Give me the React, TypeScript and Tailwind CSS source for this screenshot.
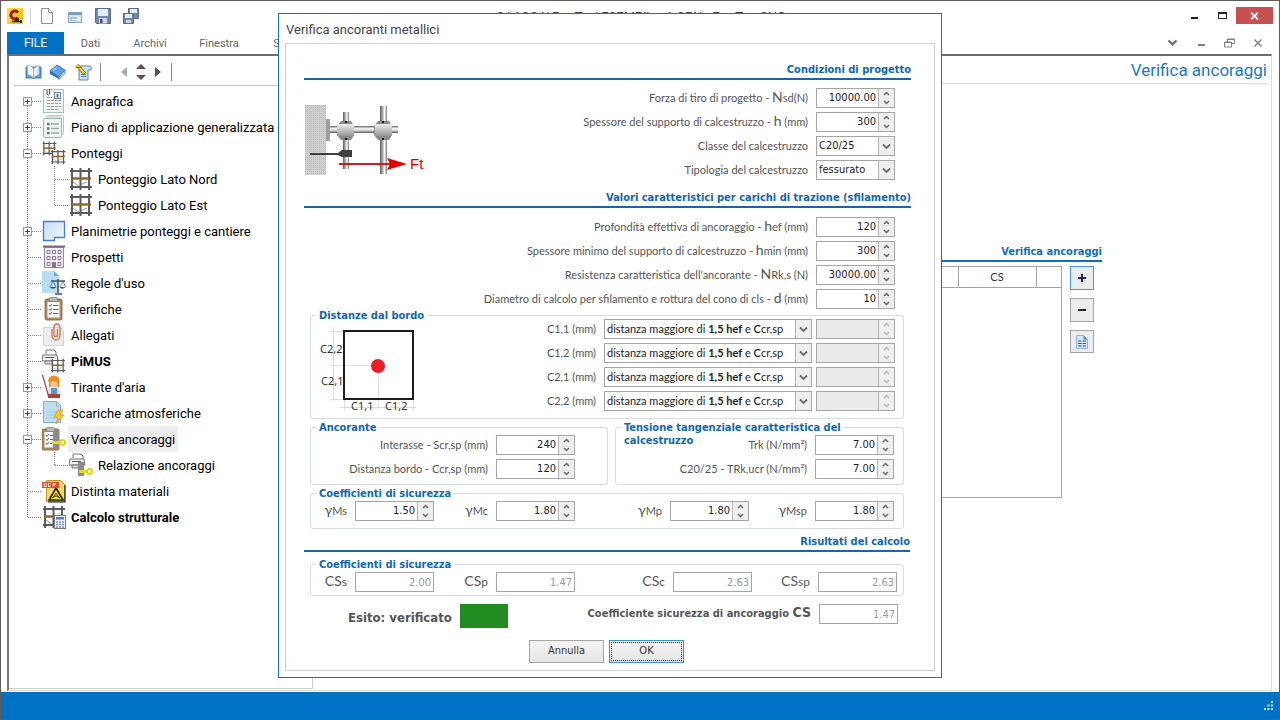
import type { ReactNode } from 'react';
import clsx from 'clsx';

type IconName =
  | 'anagrafica'
  | 'piano'
  | 'ponteggi'
  | 'ponteggio'
  | 'planimetrie'
  | 'prospetti'
  | 'regole'
  | 'verifiche'
  | 'allegati'
  | 'pimus'
  | 'tirante'
  | 'scariche'
  | 'ancoraggi'
  | 'relazione'
  | 'distinta'
  | 'calcolo';

interface TreeNode {
  label: string;
  icon: IconName;
  expander?: '+' | '-';
  child?: 'mid' | 'last';
  bold?: boolean;
  selected?: boolean;
}

const TREE: TreeNode[] = [
  { label: 'Anagrafica', icon: 'anagrafica', expander: '+' },
  { label: 'Piano di applicazione generalizzata', icon: 'piano', expander: '+' },
  { label: 'Ponteggi', icon: 'ponteggi', expander: '-' },
  { label: 'Ponteggio Lato Nord', icon: 'ponteggio', child: 'mid' },
  { label: 'Ponteggio Lato Est', icon: 'ponteggio', child: 'last' },
  { label: 'Planimetrie ponteggi e cantiere', icon: 'planimetrie', expander: '+' },
  { label: 'Prospetti', icon: 'prospetti' },
  { label: "Regole d'uso", icon: 'regole' },
  { label: 'Verifiche', icon: 'verifiche' },
  { label: 'Allegati', icon: 'allegati' },
  { label: 'PiMUS', icon: 'pimus', bold: true },
  { label: "Tirante d'aria", icon: 'tirante', expander: '+' },
  { label: 'Scariche atmosferiche', icon: 'scariche', expander: '+' },
  { label: 'Verifica ancoraggi', icon: 'ancoraggi', expander: '-', selected: true },
  { label: 'Relazione ancoraggi', icon: 'relazione', child: 'last' },
  { label: 'Distinta materiali', icon: 'distinta' },
  { label: 'Calcolo strutturale', icon: 'calcolo', bold: true },
];

/* ---------- small drawings shared by the tree icons ---------- */

function Scaffold({ x = 0, y = 0, s = 1 }: { x?: number; y?: number; s?: number }) {
  return (
    <g transform={`translate(${x} ${y}) scale(${s})`} fill="none">
      <path d="M4 15l7 5M11 18l7-3" stroke="#9a9a9a" strokeWidth="1" />
      <path d="M3 1v22M11.500 1v22M20 1v22" stroke="#5b5b5f" strokeWidth="2" />
      <path d="M1 4h22M1 20h22" stroke="#5b5b5f" strokeWidth="1.800" />
      <path d="M2 11.500h20" stroke="#8a6420" strokeWidth="2.400" />
    </g>
  );
}

function Printer() {
  return (
    <g>
      <path d="M4 5V1h8l2 2v3" fill="#fff" stroke="#777" />
      <path d="M1 6h14l1 6H0z" fill="#f4f4f4" stroke="#6e6e6e" />
      <path d="M3 12h10v3H3z" fill="#d6d6d6" stroke="#777" />
      <path d="M3 8.500h9" stroke="#555" />
    </g>
  );
}

function Clipboard() {
  return (
    <g>
      <rect x="3" y="2" width="17" height="21" rx="1.500" fill="#b08a5e" stroke="#7d5a33" strokeWidth=".8" />
      <rect x="5.500" y="5" width="12" height="15.500" fill="#fff" />
      <rect x="7.500" y="0.500" width="8" height="4" rx="1" fill="#b9b9b9" stroke="#777" strokeWidth=".7" />
      <path d="M7 8l1 1.500L10 7M7 12l1 1.500L10 11M7 16l1 1.500L10 15" fill="none" stroke="#3c6f77" />
      <path d="M11 8.500h5.500M11 12.500h5.500M11 16.500h5.500" stroke="#5d6c70" />
    </g>
  );
}

function AnchorKey() {
  return (
    <g>
      <path d="M10 15.500h8" stroke="#e8dc1e" strokeWidth="3" />
      <circle cx="20.500" cy="15.500" r="2.500" fill="#fff" stroke="#e0d414" strokeWidth="2" />
    </g>
  );
}

function TreeIcon({ name }: { name: IconName }) {
  return (
    <svg width="24" height="24" viewBox="0 0 24 24" className="block shrink-0" aria-hidden="true">
      {name === 'anagrafica' && (
        <g>
          <rect x="1.500" y="0.500" width="20" height="23" fill="#f2f7f6" stroke="#a9bfbb" />
          <path d="M5 1v4q1.500 2 2.500 0V0" fill="none" stroke="#4a5558" />
          <rect x="12.500" y="3.500" width="6" height="6" fill="#e2ecef" stroke="#6f8f98" />
          <path d="M15.500 5v3.500" stroke="#44565c" strokeWidth="1.500" />
          <path d="M5 8.500h5M5 11.500h14M5 14.500h14M5 17.500h14M5 20.500h11" stroke="#8fa19f" strokeDasharray="3 1" />
        </g>
      )}
      {name === 'piano' && (
        <g>
          <rect x="5.500" y="0.500" width="16" height="19" rx="1" fill="#f3f9f7" stroke="#b3cac4" />
          <rect x="3.500" y="2" width="16" height="19" rx="1" fill="#f3f9f7" stroke="#b3cac4" />
          <rect x="1.500" y="3.500" width="18" height="19" rx="1" fill="#edf5f2" stroke="#9bb8b0" />
          <path d="M5 9h2.500M5 13.500h2.500M5 18h2.500" stroke="#5b7a76" strokeWidth="2.400" />
          <path d="M9 9h8M9 13.500h8M9 18h8" stroke="#97aca8" strokeWidth="1.300" />
        </g>
      )}
      {name === 'ponteggi' && (
        <g>
          <Scaffold x={0} y={0} s={0.62} />
          <rect x="10" y="9" width="13" height="14" fill="#fff" />
          <Scaffold x={8.5} y={8} s={0.65} />
        </g>
      )}
      {name === 'ponteggio' && <Scaffold />}
      {name === 'planimetrie' && (
        <g>
          <defs>
            <linearGradient id="plan" x1="0" y1="0" x2="1" y2="1">
              <stop offset="0" stopColor="#c5dbfa" />
              <stop offset="1" stopColor="#f3f8ff" />
            </linearGradient>
          </defs>
          <path d="M1.500 2.500h21v16H12.500v3h-11z" fill="url(#plan)" stroke="#3f7fd0" strokeWidth="1.300" />
        </g>
      )}
      {name === 'prospetti' && (
        <g>
          <rect x="2.500" y="2.500" width="19" height="20" fill="#f3edf5" stroke="#9b85a1" />
          <path d="M1 1.500h22" stroke="#7d6685" strokeWidth="2" />
          <path
            d="M5 5.500h3v3H5zM10.500 5.500h3v3h-3zM16 5.500h3v3h-3zM5 11.500h3v3H5zM10.500 11.500h3v3h-3zM16 11.500h3v3h-3zM5 17.500h3v3H5zM16 17.500h3v3h-3z"
            fill="#fff"
            stroke="#8d7594"
          />
          <path d="M10 17h4v6h-4z" fill="#8d6f9a" />
        </g>
      )}
      {name === 'regole' && (
        <g>
          <path d="M0 0h12l5 5v17H0z" fill="#b8def4" />
          <path d="M12 0l5 5h-5z" fill="#6cb0db" />
          <path d="M16 8v14M9 10h14M13 23h7" stroke="#3e5666" strokeWidth="1.500" fill="none" />
          <path d="M11 10l-3 6M11 10l3 6M21 10l-3 6M21 10l2.500 6" stroke="#4f6878" strokeWidth=".8" />
          <path d="M7.500 16h7q-3.500 3.500-7 0zM17.500 16h6q-3 3.500-6 0z" fill="#3e5666" />
        </g>
      )}
      {name === 'verifiche' && <Clipboard />}
      {name === 'allegati' && (
        <g>
          <path d="M1.500 4.500h17l3 3v15h-20z" fill="#eceef1" stroke="#d0d3d8" />
          <path
            d="M10 6v7a4 4 0 0 0 8 0V4a3 3 0 0 0-6 0v8a1.500 1.500 0 0 0 3.500 0V6"
            fill="none"
            stroke="#d8713f"
            strokeWidth="1.300"
          />
        </g>
      )}
      {name === 'pimus' && (
        <g>
          <Printer />
          <rect x="10" y="10" width="13" height="13" fill="#fff" />
          <Scaffold x={8.5} y={9} s={0.63} />
        </g>
      )}
      {name === 'tirante' && (
        <g>
          <path d="M5 22l2-9h10l3 9z" fill="#d4e3ef" />
          <path d="M9 13h6v9H9z" fill="#5f95c8" />
          <circle cx="12" cy="8" r="4.500" fill="#f5c29a" />
          <path d="M6 6.500a6 6 0 0 1 12 0z" fill="#f08a1d" />
          <path d="M7 6h1.500v6H7zM15.500 6H17v6h-1.500z" fill="#e9801a" />
          <path d="M6 19h12v4H6z" fill="#9c4a36" />
          <path d="M0.500 0l6 21" stroke="#c0392b" strokeWidth="1.200" />
        </g>
      )}
      {name === 'scariche' && (
        <g>
          <path d="M1.500 0.500h13l4 4v17h-17z" fill="#bfdff3" stroke="#79b0d6" />
          <path d="M14.500 1v4h4" fill="#e6f4fc" stroke="#79b0d6" />
          <path d="M4 11h12M4 14h12M4 17h12" stroke="#9fcbe6" />
          <path d="M16 9l-4 7h4l-2 7 8-9h-4l3-5z" fill="#fbc52d" stroke="#d99a1c" strokeWidth=".8" />
        </g>
      )}
      {name === 'ancoraggi' && (
        <g>
          <g transform="translate(-3 0)">
            <Clipboard />
          </g>
          <path d="M11 4h6v17h-6z" fill="#8b8b8b" />
          <AnchorKey />
        </g>
      )}
      {name === 'relazione' && (
        <g>
          <Printer />
          <path d="M9 9h6v14H9z" fill="#8b8b8b" />
          <g transform="translate(0 3)">
            <AnchorKey />
          </g>
        </g>
      )}
      {name === 'distinta' && (
        <g>
          <path d="M4.500 1.500h14l4 4v17h-18z" fill="#ffd964" stroke="#c99316" />
          <path d="M14 9l7 12H7z" fill="#ffe600" stroke="#1b1b1b" strokeWidth="1.600" />
          <path d="M14 14l3 5M14 14l-3 5M10 19q4-4 8 0" fill="none" stroke="#1b1b1b" strokeWidth=".8" />
          <path d="M23 6v17H6" fill="none" stroke="#1b1b1b" strokeWidth="1.200" />
          <rect x="0" y="3" width="17" height="6" fill="#e5482e" />
          <path d="M2 4.500v3h2.500v-3zM9 4.500H6.500v3H9M11 7.500v-3h3M11 6h2.500" fill="none" stroke="#fff" strokeWidth=".9" />
        </g>
      )}
      {name === 'calcolo' && (
        <g>
          <Scaffold />
          <rect x="12.500" y="10.500" width="11" height="13" fill="#eef3fb" stroke="#6c7f9c" />
          <rect x="14" y="12" width="8" height="2.500" fill="#4d82c6" />
          <path d="M14 17h8M14 19.500h8M14 22h8" stroke="#7d93b3" strokeWidth="1.400" strokeDasharray="2 1" />
        </g>
      )}
    </svg>
  );
}

/* dotted guide lines and the expander box in front of a node */
function TreeGuide({ node, first, last }: { node: TreeNode; first: boolean; last: boolean }) {
  const width = node.child ? 55 : 28;
  return (
    <svg width={width} height="26" viewBox={`0 0 ${width} 26`} className="block shrink-0" aria-hidden="true">
      <g stroke="#808080" strokeDasharray="1 1" fill="none">
        <path d={`M13.500 ${first ? 14 : 0}V${last ? 14 : 26}`} />
        {node.child ? (
          <path d={`M40.500 0V${node.child === 'last' ? 14 : 26}M41 13.500H55`} />
        ) : (
          <path d="M14 13.500H28" />
        )}
      </g>
      {node.expander && (
        <g>
          <rect x="9.500" y="9.500" width="8" height="8" fill="#fff" stroke="#9a9a9a" />
          <path d={node.expander === '+' ? 'M11 13.500h5M13.500 11v5' : 'M11 13.500h5'} stroke="#39417a" />
        </g>
      )}
    </svg>
  );
}

function Tree() {
  return (
    <ul className="pt-[2px] pl-px text-[13px]">
      {TREE.map((node, i) => (
        <li key={node.label} className="flex h-[26px] items-center whitespace-nowrap text-black">
          <TreeGuide node={node} first={i === 0} last={i === TREE.length - 1} />
          <TreeIcon name={node.icon} />
          <span
            className={clsx(
              'ml-[2px] flex h-[26px] items-center px-[3px] pt-[2px]',
              node.bold && 'font-bold',
              node.selected && 'bg-[#eeeeee]'
            )}
          >
            {node.label}
          </span>
        </li>
      ))}
    </ul>
  );
}

/* ---------- window chrome ---------- */

function TitleBar() {
  return (
    <header className="flex h-[31px] shrink-0 items-start">
      <div className="flex items-center pt-[7px] pl-[6px]">
        <svg width="16" height="16" viewBox="0 0 16 16" aria-hidden="true">
          <rect width="16" height="16" fill="#f6dc3a" />
          <path d="M0 16L16 0v16z" fill="#efc81e" />
          <path d="M11 4.500a4 4 0 1 0 0 5" fill="none" stroke="#b3161d" strokeWidth="3" />
          <path d="M5 13.500h9M9 13V11h2v2M14 12v3" stroke="#2b1d10" strokeWidth="1.500" fill="none" />
        </svg>
        <span className="mr-2 ml-[7px] h-4 w-px bg-[#d5d5d5]" />
        <div className="flex gap-3">
          <button aria-label="Nuovo" className="flex h-4 w-4 items-center justify-center">
            <svg width="16" height="16" viewBox="0 0 16 16">
              <path d="M2.500 0.500h7l4 4v11h-11z" fill="#fff" stroke="#8e9197" />
              <path d="M9.500 0.500v4h4" fill="#eee" stroke="#8e9197" />
            </svg>
          </button>
          <button aria-label="Apri" className="flex h-4 w-4 items-center justify-center">
            <svg width="16" height="16" viewBox="0 0 16 16">
              <rect x="1.500" y="4.500" width="13" height="10" fill="#d9e8f4" stroke="#86a3bd" />
              <path d="M2 6h12" stroke="#6d9ccb" strokeWidth="2" />
              <path d="M3 9h7v4H3z" fill="#a4c5e2" />
              <path d="M11 9.500h3M5 11.500h8" stroke="#fff" />
            </svg>
          </button>
          <button aria-label="Salva" className="flex h-4 w-4 items-center justify-center">
            <svg width="16" height="16" viewBox="0 0 16 16">
              <path d="M0.500 0.500h15v15h-14l-1-1z" fill="#7387a8" stroke="#5a6c8c" />
              <rect x="3" y="1" width="10" height="7" fill="#e4ebf5" />
              <rect x="4" y="10" width="8" height="5.500" fill="#cfd6e2" />
              <rect x="5" y="11" width="2.500" height="4" fill="#44546f" />
            </svg>
          </button>
          <button aria-label="Salva tutto" className="flex h-4 w-4 items-center justify-center">
            <svg width="16" height="16" viewBox="0 0 16 16">
              <path d="M5.500 0.500h10v10h-10z" fill="#7387a8" stroke="#5a6c8c" />
              <path d="M7 1h7v4H7z" fill="#e4ebf5" />
              <path d="M0.500 5.500h10v10h-10z" fill="#7387a8" stroke="#5a6c8c" />
              <path d="M2 6h7v4H2z" fill="#e4ebf5" />
              <path d="M3 12h5v3H3z" fill="#cfd6e2" />
            </svg>
          </button>
        </div>
      </div>
      <h1 className="flex-1 pr-[38px] text-center text-[13px] leading-[31px] text-[#444]">
        C:\ACCA\PonTus\ESEMPI\es1.CPN - PonTus CNG
      </h1>
      <div className="flex pt-[6px] pr-[6px]">
        <button aria-label="Riduci a icona" className="flex h-[17px] w-[27px] items-end justify-center pb-[5px]">
          <span className="h-[2px] w-[7px] bg-[#222]" />
        </button>
        <button aria-label="Ingrandisci" className="flex h-[17px] w-[28px] items-center justify-center">
          <span className="h-[7px] w-[9px] border border-t-2 border-[#222]" />
        </button>
        <button aria-label="Chiudi" className="flex h-[17px] w-[37px] items-center justify-center bg-[#c75050]">
          <svg width="9" height="8" viewBox="0 0 9 8">
            <path d="M1 0.500l7 7M8 0.500l-7 7" stroke="#fff" strokeWidth="1.800" />
          </svg>
        </button>
      </div>
    </header>
  );
}

function Ribbon() {
  return (
    <nav className="flex h-[22px] shrink-0 items-center pl-[6px] text-[11px] text-[#666]">
      <button className="h-full w-[57px] bg-[#0072c6] text-xs text-white">FILE</button>
      <button className="w-[53px] pt-[2px]">Dati</button>
      <button className="w-[66px] pt-[2px]">Archivi</button>
      <button className="w-[72px] pt-[2px]">Finestra</button>
      <button className="w-[84px] pt-[2px]">Strumenti</button>
      <div className="ml-auto flex items-center gap-[18px] pr-4">
        <button aria-label="Comprimi barra">
          <svg width="11" height="10" viewBox="0 0 11 10" className="block">
            <path d="M1.500 2.500l4 4 4-4" fill="none" stroke="#666" strokeWidth="2" />
          </svg>
        </button>
        <button aria-label="Riduci documento">
          <svg width="10" height="10" viewBox="0 0 10 10" className="block">
            <path d="M2 7h7" stroke="#808080" strokeWidth="2" />
          </svg>
        </button>
        <button aria-label="Ripristina documento">
          <svg width="11" height="10" viewBox="0 0 11 10" className="block">
            <path d="M3.500 4V1h7v4.500H8M3.500 1.500h7M0.500 4h7v5h-7zM0.500 4.500h7" fill="none" stroke="#808080" />
          </svg>
        </button>
        <button aria-label="Chiudi documento">
          <svg width="10" height="10" viewBox="0 0 10 10" className="block">
            <path d="M1.500 1.500l7 7M8.500 1.500l-7 7" stroke="#808080" strokeWidth="1.500" />
          </svg>
        </button>
      </div>
    </nav>
  );
}

function TreeToolbar() {
  return (
    <div className="ml-px flex h-[30px] items-center border-b border-[#c8c8c8] pt-[3px] pl-[11px]">
      <button aria-label="Apri volume" className="mr-[7px]">
        <svg width="17" height="16" viewBox="0 0 17 16" className="block">
          <path d="M1 3h15v11H9.500L8.500 15 7.500 14H1z" fill="#5ea0dc" stroke="#3a76b8" />
          <path d="M2.500 1q4 .5 6 4v9q-2-3-6-3.500z" fill="#fbfdff" stroke="#8aa9c6" strokeWidth=".8" />
          <path d="M14 1.500q-4 1-5.500 3.500v9q2-2.500 5.500-3.500z" fill="#e5effa" stroke="#8aa9c6" strokeWidth=".8" />
        </svg>
      </button>
      <button aria-label="Chiudi volume" className="mr-[9px]">
        <svg width="17" height="16" viewBox="0 0 17 16" className="block">
          <path d="M1 7L8 1l8 5-6 7z" fill="#5fa0e6" stroke="#2f6cb0" strokeWidth=".8" />
          <path d="M1 7v3l9 5v-2z" fill="#2f69b4" />
          <path d="M10 13v2.500l6-6V6z" fill="#dce9f7" stroke="#2f6cb0" strokeWidth=".8" />
          <path d="M4 6.500L8 3" stroke="#a9d0f8" strokeWidth="1.500" />
        </svg>
      </button>
      <button aria-label="Modifica" className="mr-2">
        <svg width="17" height="17" viewBox="0 0 17 17" className="block">
          <path d="M4 2h11q2 1 1 4h-3v10H4z" fill="#cfe0f1" stroke="#5c84ac" />
          <path d="M6 8.500h5M6 10.500h5M6 12.500h5" stroke="#55779c" />
          <path d="M2 1l8 9" stroke="#8b6d12" strokeWidth="3.400" />
          <path d="M2 1l7.500 8.500" stroke="#f4d22c" strokeWidth="2" />
          <path d="M0.500 3.500h6" stroke="#c0392b" strokeWidth=".8" />
        </svg>
      </button>
      <span className="h-[18px] w-px bg-[#8a8a8a]" />
      <div className="ml-5 flex items-center gap-[9px]">
        <button aria-label="Indietro">
          <svg width="6" height="10" viewBox="0 0 6 10" className="block">
            <path d="M6 0v10L0 5z" fill="#a9a9a9" />
          </svg>
        </button>
        <span className="flex flex-col gap-1">
          <button aria-label="Su">
            <svg width="10" height="7" viewBox="0 0 10 7" className="block">
              <path d="M0 6l5-5 5 5z" fill="#5f4b55" />
            </svg>
          </button>
          <button aria-label="Giù">
            <svg width="10" height="7" viewBox="0 0 10 7" className="block">
              <path d="M0 1l5 5 5-5z" fill="#5f4b55" />
            </svg>
          </button>
        </span>
        <button aria-label="Avanti">
          <svg width="6" height="10" viewBox="0 0 6 10" className="block">
            <path d="M0 0v10l6-5z" fill="#5f4b55" />
          </svg>
        </button>
      </div>
      <span className="ml-[10px] h-[18px] w-px bg-[#8a8a8a]" />
    </div>
  );
}

/* ---------- form controls ---------- */

interface SpinProps {
  id: string;
  value?: string;
  disabled?: boolean;
}

function Spin({ id, value = '', disabled = false }: SpinProps) {
  const color = disabled ? '#b5b5b5' : '#6b6b6b';
  return (
    <div className={clsx('flex h-5 w-[79px] shrink-0 border border-[#a5a5a5]', disabled ? 'bg-[#ebebeb]' : 'bg-white')}>
      <input
        id={id}
        type="text"
        defaultValue={value}
        disabled={disabled}
        aria-label={disabled ? id : undefined}
        className="w-0 min-w-0 flex-1 bg-transparent pr-[2px] text-right text-[11px] text-[#222] outline-none"
      />
      <span className="flex w-4 flex-col border-l border-[#b5b5b5] bg-[#efefef]">
        <button type="button" aria-label="Aumenta" disabled={disabled} className="flex flex-1 items-center justify-center">
          <svg width="7" height="5" viewBox="0 0 7 5">
            <path d="M1 4l2.500-2.500L6 4" fill="none" stroke={color} strokeWidth="1.500" />
          </svg>
        </button>
        <button type="button" aria-label="Diminuisci" disabled={disabled} className="flex flex-1 items-center justify-center">
          <svg width="7" height="5" viewBox="0 0 7 5">
            <path d="M1 1l2.500 2.500L6 1" fill="none" stroke={color} strokeWidth="1.500" />
          </svg>
        </button>
      </span>
    </div>
  );
}

function DropArrow() {
  return (
    <span className="pointer-events-none absolute inset-y-px right-px flex w-4 items-center justify-center border-l border-[#b5b5b5] bg-[#efefef]">
      <svg width="9" height="7" viewBox="0 0 9 7">
        <path d="M1 1.500l3.500 3.500L8 1.500" fill="none" stroke="#6b6b6b" strokeWidth="1.800" />
      </svg>
    </span>
  );
}

function Combo({ id, value }: { id: string; value: string }) {
  return (
    <div className="relative h-5 w-[79px] shrink-0">
      <select
        id={id}
        defaultValue={value}
        className="block h-5 w-full appearance-none border border-[#a5a5a5] bg-white pl-[2px] text-[11px] text-[#222] outline-none"
      >
        <option>{value}</option>
      </select>
      <DropArrow />
    </div>
  );
}

/* The choice is shown with mixed weights, so the formatted text lies over the select. */
function DistanceCombo({ id }: { id: string }) {
  return (
    <div className="relative h-5 w-[208px] shrink-0 font-['Lato','Noto_Sans',sans-serif]">
      <select
        id={id}
        className="block h-5 w-full appearance-none border border-[#a5a5a5] bg-white text-transparent outline-none"
      >
        <option value="max" aria-label="distanza maggiore" />
      </select>
      <span className="pointer-events-none absolute inset-y-0 left-[3px] flex items-center text-[11px] whitespace-pre text-[#222]">
        distanza maggiore di <b>1,5 hef</b> e <b className="font-semibold">C</b>cr,sp
      </span>
      <DropArrow />
    </div>
  );
}

function Result({ id, value }: { id: string; value: string }) {
  return (
    <input
      id={id}
      type="text"
      readOnly
      defaultValue={value}
      className="h-5 w-[79px] shrink-0 border border-[#a5a5a5] bg-white pr-[2px] text-right text-[11px] text-[#999] outline-none"
    />
  );
}

function Field({ id, label, children }: { id: string; label: ReactNode; children: ReactNode }) {
  return (
    <div className="flex items-center justify-end gap-2">
      <label
        htmlFor={id}
        className="flex h-5 items-center font-['Lato','Noto_Sans',sans-serif] text-[11px] whitespace-pre text-[#555]"
      >
        <span>{label}</span>
      </label>
      {children}
    </div>
  );
}

function SectionTitle({ children }: { children: ReactNode }) {
  return (
    <h3 className="border-b-2 border-[#1068b0] pt-px text-right text-[11px] leading-4 font-bold text-[#1068b0]">
      {children}
    </h3>
  );
}

interface GroupProps {
  title: string[];
  className?: string;
  children: ReactNode;
}

function Group({ title, className, children }: GroupProps) {
  return (
    <section className={clsx('relative rounded-[3px] border border-[#d3dde3]', className)}>
      <h4 className="absolute -top-[7px] left-[5px] text-[11px] leading-[13px] font-bold whitespace-nowrap text-[#1068b0]">
        {title.map((line) => (
          <span key={line} className="block w-fit bg-white px-[3px]">
            {line}
          </span>
        ))}
      </h4>
      {children}
    </section>
  );
}

const Big = ({ children }: { children: ReactNode }) => <span className="text-sm leading-4">{children}</span>;

function AnchorDrawing() {
  return (
    <svg width="126" height="72" viewBox="0 0 126 72" className="block" role="img" aria-label="Forza di tiro Ft">
      <defs>
        <linearGradient id="pipeV" x1="0" y1="0" x2="1" y2="0">
          <stop offset="0" stopColor="#5a5a5a" />
          <stop offset=".45" stopColor="#bdbdbd" />
          <stop offset=".65" stopColor="#fff" />
          <stop offset="1" stopColor="#777" />
        </linearGradient>
        <linearGradient id="pipeH" x1="0" y1="0" x2="0" y2="1">
          <stop offset="0" stopColor="#6a6a6a" />
          <stop offset=".4" stopColor="#fff" />
          <stop offset=".7" stopColor="#c0c0c0" />
          <stop offset="1" stopColor="#555" />
        </linearGradient>
        <linearGradient id="joint" x1="0" y1="0" x2="0" y2="1">
          <stop offset="0" stopColor="#ededed" />
          <stop offset="1" stopColor="#979797" />
        </linearGradient>
        <pattern id="wall" width="2" height="2" patternUnits="userSpaceOnUse">
          <rect width="2" height="2" fill="#cfcfcf" />
          <rect width="1" height="1" fill="#bcbcbc" />
        </pattern>
      </defs>
      <rect x="0" y="0" width="21" height="70" fill="url(#wall)" />
      <rect x="21" y="14" width="4" height="22" fill="#a0a0a0" />
      <rect x="25" y="21" width="68" height="7" fill="url(#pipeH)" />
      <rect x="38" y="7" width="6" height="57" fill="url(#pipeV)" />
      <rect x="75" y="1" width="7" height="68" fill="url(#pipeV)" />
      <path d="M36 16h10l3 5v9l-3 5H36l-4-5v-9zM73 16h11l3 5v9l-3 5H73l-4-5v-9z" fill="#8a8a8a" />
      <path d="M32 19h17v12H32zM70 19h17v12H70z" fill="url(#joint)" />
      <path d="M40 16h2v2h-2zM40 33h2v2h-2zM77 16h2v2h-2zM77 33h2v2h-2z" fill="#111" />
      <path d="M5 48h28l4-3h10v7H37l-4-2H5z" fill="#3f3f3f" />
      <path d="M34 59h54" stroke="#c8201c" strokeWidth="2" />
      <path d="M82 53l20 6-20 6 3-6z" fill="#e60000" />
      <text x="105" y="64" fontSize="15" fill="#e60000" className="font-['Liberation_Sans',sans-serif]">
        Ft
      </text>
    </svg>
  );
}

function EdgeDrawing() {
  return (
    <svg width="98" height="88" viewBox="0 0 98 88" className="block" role="img" aria-label="Distanze dal bordo">
      <path
        d="M13.500 0v74M10 4.500h14M10 38.500h48M10 72.500h14M24.500 72v12M93.500 72v12M58.500 38v44M20 80.500h76"
        stroke="#dcdcdc"
        fill="none"
      />
      <rect x="24" y="4" width="69" height="68" fill="#fff" stroke="#1d1d1d" strokeWidth="2" />
      <path d="M25 38.500h33.500V71" stroke="#dedede" fill="none" />
      <circle cx="58" cy="39" r="7" fill="#ed1c24" />
      <g fontSize="11" fill="#333" className="font-['Noto_Sans',sans-serif]">
        <text x="0" y="26">C2,2</text>
        <text x="1" y="58">C2,1</text>
        <text x="31" y="83">C1,1</text>
        <text x="65" y="83">C1,2</text>
      </g>
    </svg>
  );
}

const MATERIALS: { id: string; label: ReactNode; value: string }[] = [
  { id: 'hef', label: <>Profondità effettiva di ancoraggio - <Big>h</Big>ef (mm)</>, value: '120' },
  { id: 'hmin', label: <>Spessore minimo del supporto di calcestruzzo - <Big>h</Big>min (mm)</>, value: '300' },
  { id: 'nrks', label: <>Resistenza caratteristica dell'ancorante - <Big>N</Big>Rk,s (N)</>, value: '30000.00' },
  {
    id: 'diametro',
    label: <>Diametro di calcolo per sfilamento e rottura del cono di cls - <Big>d</Big> (mm)</>,
    value: '10',
  },
];

const GAMMAS = [
  { id: 'yms', sub: 'Ms', value: '1.50' },
  { id: 'ymc', sub: 'Mc', value: '1.80' },
  { id: 'ymp', sub: 'Mp', value: '1.80' },
  { id: 'ymsp', sub: 'Msp', value: '1.80' },
];

const RESULTS = [
  { id: 'css', sub: 's', value: '2.00' },
  { id: 'csp', sub: 'p', value: '1.47' },
  { id: 'csc', sub: 'c', value: '2.63' },
  { id: 'cssp', sub: 'sp', value: '2.63' },
];

function AnchorDialog() {
  return (
    <div
      role="dialog"
      aria-labelledby="dlg-title"
      className="absolute top-3 left-[277px] w-[664px] border border-[#1a72a8] bg-white px-[6px] pb-[6px] font-['DejaVu_Sans_Condensed','DejaVu_Sans',sans-serif]"
    >
      <h2 id="dlg-title" className="h-[29px] pl-px font-['Roboto',sans-serif] text-[13px] leading-8 text-[#444]">
        Verifica ancoranti metallici
      </h2>
      <form className="border border-[#cfcfcf] px-[18px] pt-[17px] pb-[7px]">
        <div className="pr-[5px]">
          <SectionTitle>Condizioni di progetto</SectionTitle>
          <div className="flex justify-between pt-2 pr-4">
            <div className="pt-[17px] pl-px">
              <AnchorDrawing />
            </div>
            <div className="flex flex-col gap-1">
              <Field id="nsd" label={<>Forza di tiro di progetto - <Big>N</Big>sd(N)</>}>
                <Spin id="nsd" value="10000.00" />
              </Field>
              <Field id="spessore" label={<>Spessore del supporto di calcestruzzo - <Big>h</Big> (mm)</>}>
                <Spin id="spessore" value="300" />
              </Field>
              <Field id="classe" label="Classe del calcestruzzo">
                <Combo id="classe" value="C20/25" />
              </Field>
              <Field id="tipologia" label="Tipologia del calcestruzzo">
                <Combo id="tipologia" value="fessurato" />
              </Field>
            </div>
          </div>
          <div className="pt-[9px]">
            <SectionTitle>Valori caratteristici per carichi di trazione (sfilamento)</SectionTitle>
          </div>
          <div className="flex flex-col gap-1 pt-[9px] pr-4 pb-[6px]">
            {MATERIALS.map((m) => (
              <Field key={m.id} id={m.id} label={m.label}>
                <Spin id={m.id} value={m.value} />
              </Field>
            ))}
          </div>
        </div>

        <div className="flex flex-col gap-2 pr-3 pl-[6px]">
          <Group title={['Distanze dal bordo']} className="flex justify-between pt-[3px] pr-2 pl-[9px]">
            <div className="pt-2">
              <EdgeDrawing />
            </div>
            <div className="flex flex-col gap-1 pb-[7px]">
              {['C1,1', 'C1,2', 'C2,1', 'C2,2'].map((c) => (
                <div key={c} className="flex gap-1">
                  <Field id={`combo-${c}`} label={`${c} (mm)`}>
                    <DistanceCombo id={`combo-${c}`} />
                  </Field>
                  <Spin id={`distanza-${c}`} disabled />
                </div>
              ))}
            </div>
          </Group>

          <div className="flex gap-[7px]">
            <Group title={['Ancorante']} className="flex w-[298px] flex-col gap-1 pt-[7px] pr-8 pb-[5px]">
              <Field id="scrsp" label="Interasse - Scr,sp (mm)">
                <Spin id="scrsp" value="240" />
              </Field>
              <Field id="ccrsp" label="Distanza bordo - Ccr,sp (mm)">
                <Spin id="ccrsp" value="120" />
              </Field>
            </Group>
            <Group
              title={['Tensione tangenziale caratteristica del', 'calcestruzzo']}
              className="flex flex-1 flex-col gap-1 pt-[7px] pr-[9px] pb-[5px]"
            >
              <Field id="trk" label="Trk (N/mm²)">
                <Spin id="trk" value="7.00" />
              </Field>
              <Field id="trkucr" label="C20/25 - TRk,ucr (N/mm²)">
                <Spin id="trkucr" value="7.00" />
              </Field>
            </Group>
          </div>

          <Group
            title={['Coefficienti di sicurezza']}
            className="grid grid-cols-[123px_141px_174px_145px] pt-[7px] pb-[7px]"
          >
            {GAMMAS.map((g) => (
              <Field key={g.id} id={g.id} label={<><Big>γ</Big>{g.sub}</>}>
                <Spin id={g.id} value={g.value} />
              </Field>
            ))}
          </Group>
        </div>

        <div className="pt-1 pr-[6px]">
          <SectionTitle>Risultati del calcolo</SectionTitle>
        </div>

        <div className="pt-3 pr-3 pl-[6px]">
          <Group
            title={['Coefficienti di sicurezza']}
            className="grid grid-cols-[123px_141px_177px_145px] pt-[7px] pb-[3px]"
          >
            {RESULTS.map((r) => (
              <Field key={r.id} id={r.id} label={<><Big>CS</Big><span className="text-xs">{r.sub}</span></>}>
                <Result id={r.id} value={r.value} />
              </Field>
            ))}
          </Group>
        </div>

        <div className="flex items-start justify-between pt-2 pr-[18px] pl-11 text-[#555]">
          <div className="flex items-center gap-2">
            <strong className="pt-1 text-[13px]">Esito: verificato</strong>
            <span className="h-6 w-12 bg-[#228b22]" />
          </div>
          <div className="flex items-center gap-2">
            <label htmlFor="cs" className="text-[11px] leading-5 font-bold">
              Coefficiente sicurezza di ancoraggio <Big>CS</Big>
            </label>
            <Result id="cs" value="1.47" />
          </div>
        </div>

        <div className="flex justify-center gap-[5px] pt-3 pr-[7px]">
          <button
            type="button"
            className="h-[23px] w-[75px] border border-[#a5a5a5] bg-linear-to-b from-[#f4f4f4] to-[#e6e6e6] text-[11px] text-[#333]"
          >
            Annulla
          </button>
          <button
            type="button"
            className="h-[23px] w-[75px] border border-[#3b8edc] bg-linear-to-b from-[#f4f4f4] to-[#e6e6e6] p-px text-[11px] text-[#333]"
          >
            <span className="flex h-full items-center justify-center border border-dotted border-[#333]">OK</span>
          </button>
        </div>
      </form>
    </div>
  );
}

function MainPanel() {
  return (
    <main className="min-w-0 flex-1">
      <h2 className="mr-1 h-7 border-b border-[#d9d9d9] text-right text-[17px] leading-7 text-[#1b78c2]">
        Verifica ancoraggi
      </h2>
      <div className="pt-[161px] pr-[169px] pl-[10px]">
        <h3 className="border-b-2 border-[#0f6fc0] pb-px text-right font-['DejaVu_Sans_Condensed',sans-serif] text-[11px] leading-[14px] font-bold text-[#0f6fc0]">
          Verifica ancoraggi
        </h3>
        <div className="flex gap-2 pt-1 pr-2">
          <div className="h-[232px] flex-1 border border-[#a5a5a5]">
            <table className="w-full table-fixed font-['Lato',sans-serif] text-[11px] text-[#333]">
              <thead>
                <tr className="h-5 border-b border-[#a5a5a5]">
                  <th />
                  <th className="w-[78px] border-x border-[#a5a5a5] font-normal">CS</th>
                  <th className="w-[25px]" />
                </tr>
              </thead>
            </table>
          </div>
          <div className="flex flex-col gap-2">
            <button
              aria-label="Aggiungi"
              className="flex h-6 w-6 items-center justify-center border border-[#4a96e0] bg-[#ececee]"
            >
              <svg width="10" height="10" viewBox="0 0 10 10">
                <path d="M1 5h8M5 1v8" stroke="#1c1c5c" strokeWidth="2" />
              </svg>
            </button>
            <button
              aria-label="Rimuovi"
              className="flex h-6 w-6 items-center justify-center border border-[#a5a5a5] bg-[#ececee]"
            >
              <svg width="10" height="10" viewBox="0 0 10 10">
                <path d="M1 5h8" stroke="#1a1a1a" strokeWidth="2" />
              </svg>
            </button>
            <button
              aria-label="Dettagli"
              className="flex h-[23px] w-6 items-center justify-center border border-[#a5a5a5] bg-[#ececee]"
            >
              <svg width="12" height="14" viewBox="0 0 12 14">
                <path d="M0.500 0.500h7l4 4v9h-11z" fill="#d8e7f8" stroke="#8fb4de" />
                <path d="M7.500 0.500v4h4z" fill="#4e83c4" />
                <path d="M2 6h3.500M6.500 6H10M2 8.500h3.500M6.500 8.500H10M2 11h3.500M6.500 11H10" stroke="#35557f" />
              </svg>
            </button>
          </div>
        </div>
      </div>
    </main>
  );
}

export default function App() {
  return (
    <div className="relative flex h-screen min-h-[692px] flex-col overflow-hidden border border-[#5f5b5b] bg-white font-['Roboto','Noto_Sans',sans-serif]">
      <TitleBar />
      <Ribbon />
      <div className="mr-[7px] ml-[6px] flex flex-1 border-t-2 border-r border-b border-l-2 border-t-[#6d6d6d] border-r-[#dcdcdc] border-b-[#dcdcdc] border-l-[#7a7a7a]">
        <aside className="mb-px w-[304px] shrink-0 border-r border-b border-[#cfcfcf] pl-1">
          <TreeToolbar />
          <Tree />
        </aside>
        <MainPanel />
      </div>
      <footer className="mt-px flex h-[27px] shrink-0 items-center justify-end bg-[#0072c6] pr-[6px]">
        <svg width="9" height="9" viewBox="0 0 9 9" aria-hidden="true">
          <path
            d="M7 0h2v2H7zM3.500 3.500h2v2h-2zM7 3.500h2v2H7zM0 7h2v2H0zM3.500 7h2v2h-2zM7 7h2v2H7z"
            fill="#c9e2f6"
          />
        </svg>
      </footer>
      <AnchorDialog />
    </div>
  );
}
